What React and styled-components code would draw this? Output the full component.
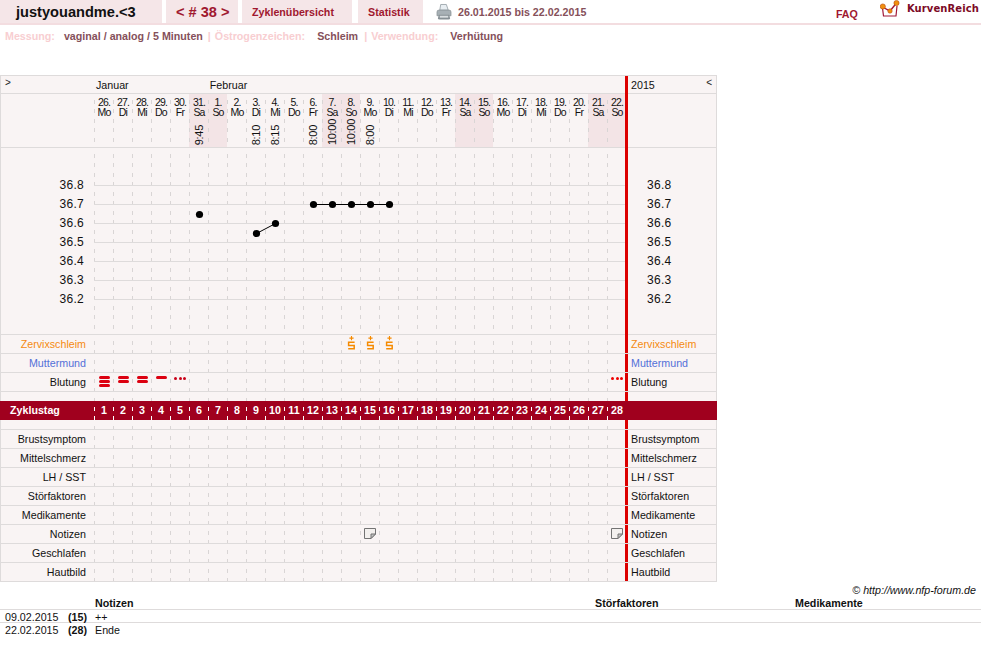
import React from "react"
import styled, { createGlobalStyle } from "styled-components"

const GlobalStyle = createGlobalStyle`
  html, body {
    margin: 0;
    padding: 0;
    background: #fff;
    font-family: "Liberation Sans", Arial, sans-serif;
    font-size: 10.7px;
    color: #111;
  }
`

const LINE = "#dedbdb"
const DASH = "#d9d5d5"
const PANEL = "#f9f4f4"
const COL = 19

const Page = styled.div`
  width: 981px;
  height: 661px;
  overflow: hidden;
`

const Header = styled.header`
  display: flex;
  height: 23px;
  border-bottom: 2px solid #f3dde0;
`
const Tab = styled.div`
  width: ${(p) => p.$w}px;
  margin-right: ${(p) => p.$gap || 0}px;
  padding-left: ${(p) => p.$pad || 0}px;
  box-sizing: border-box;
  background: #f5e6e8;
  color: ${(p) => p.$color || "#a0182f"};
  font-size: ${(p) => p.$size || 10.7}px;
  font-weight: bold;
  line-height: 24px;
  white-space: nowrap;
`
const PrintIcon = styled.svg`
  width: 16px;
  height: 18px;
  margin: 3px 6px 0 13px;
`
const DateRange = styled.div`
  color: #85505a;
  font-weight: bold;
  line-height: 24px;
`
const Faq = styled.div`
  margin-left: auto;
  margin-right: 22px;
  padding-top: 8px;
  color: #a0182f;
  font-weight: bold;
`
const LogoIcon = styled.svg`
  width: 20px;
  height: 18px;
  margin: 0 7px 0 0;
`
const LogoText = styled.div`
  margin-right: 2px;
  padding-top: 3px;
  color: #7c0a26;
  font-family: "DejaVu Sans", sans-serif;
  font-size: 10px;
  font-weight: bold;
  letter-spacing: 0.1px;
`

const Meta = styled.div`
  display: flex;
  height: 14px;
  margin: 4px 0 32px;
  padding-left: 5px;
  font-weight: bold;
  line-height: 14px;
`
const MetaKey = styled.span`
  color: #f8ced1;
  margin-left: ${(p) => p.$left || 0}px;
`
const MetaValue = styled.span`
  color: #85505a;
  margin-left: ${(p) => p.$left || 0}px;
`

const Table = styled.div`
  width: 717px;
  box-sizing: border-box;
  border: 1px solid ${LINE};
  border-width: 1px 1px 0;
  background: ${PANEL};
`
const Row = styled.div`
  display: grid;
  grid-template-columns: 93px 531px 1fr;
  height: ${(p) => p.$h}px;
  box-sizing: border-box;
  border-bottom: ${(p) => (p.$noLine ? "none" : `1px solid ${LINE}`)};
`
const Band = styled.div`
  display: grid;
  grid-template-columns: 94px 531px 1fr;
  height: 19px;
  margin: 0 -1px;
  background: #a0001e;
  color: #fff;
  font-weight: bold;
  line-height: 19px;
`
const BandLabel = styled.div`
  padding-left: 10px;
`
const RowLabel = styled.div`
  padding-right: 8px;
  text-align: right;
  line-height: 18px;
  color: ${(p) => p.$color || "#111"};
`
const SideCell = styled.div`
  position: relative;
  margin-bottom: ${(p) => (p.$joined ? "-1px" : "0")};
  padding-left: 3px;
  border-left: 3px solid #dc0000;
  line-height: 18px;
  color: ${(p) => p.$color || "#111"};
`
const SideHead = styled.div`
  display: flex;
  justify-content: space-between;
  padding-right: 4px;
`
const Toggle = styled.span`
  font-size: 10px;
  line-height: 13px;
  color: #222;
`
const CornerCell = styled.div`
  padding-left: 4px;
`
const Strip = styled.div`
  display: flex;
  overflow: hidden;
  position: relative;
`
const Month = styled.div`
  width: ${(p) => p.$cols * COL}px;
  padding-left: 2px;
  box-sizing: border-box;
  line-height: 18px;
`
const DayCell = styled.div`
  flex: 0 0 ${COL}px;
  box-sizing: border-box;
  padding-left: 1px;
  display: flex;
  flex-direction: column;
  align-items: center;
  background-color: ${(p) => (p.$weekend ? "#f3e4e6" : "transparent")};
  background-image: linear-gradient(
    to bottom,
    transparent 0 6px,
    ${(p) => p.$dash || DASH} 6px 10px,
    transparent 10px 15px,
    ${(p) => p.$dash || DASH} 15px 19px
  );
  background-size: 1px 19px;
  background-repeat: repeat-y;
`
const DayHead = styled.div`
  padding-top: 4px;
  text-align: center;
  font-size: 10.5px;
  line-height: 9.5px;
  letter-spacing: -0.8px;
  white-space: nowrap;
`
const TimeMark = styled.div`
  margin-top: auto;
  margin-bottom: 2px;
  writing-mode: vertical-rl;
  transform: rotate(180deg);
  font-size: 11px;
  line-height: 12px;
  letter-spacing: -0.3px;
`
const BandNum = styled.div`
  width: 100%;
  text-align: center;
`
const ScaleColumn = styled.div`
  padding-top: 28px;
  padding-right: ${(p) => p.$right || 0}px;
  padding-left: ${(p) => p.$left || 0}px;
  text-align: ${(p) => (p.$right ? "right" : "left")};
  font-size: 12px;
  line-height: 19px;
  letter-spacing: 0.3px;
`
const ChartSide = styled.div`
  margin-bottom: -1px;
  border-left: 3px solid #dc0000;
`
const ChartOverlay = styled.svg`
  position: absolute;
  inset: 0;
  width: 531px;
  height: 186px;
`
const BloodStack = styled.div`
  display: flex;
  flex-direction: column;
  gap: 1.4px;
  padding-top: 3px;
`
const Pill = styled.span`
  display: block;
  width: 11px;
  height: 2.8px;
  border-radius: 2px;
  background: #dc0010;
`
const Dots = styled.div`
  display: flex;
  gap: 1.2px;
  padding-top: 4px;
`
const Dot = styled.span`
  width: 3px;
  height: 3px;
  border-radius: 50%;
  background: ${(p) => (p.$bright ? "#ee0000" : "#c80018")};
`
const MarkSvg = styled.svg`
  display: block;
  margin-top: ${(p) => p.$top}px;
`

const Credit = styled.div`
  height: 15px;
  box-sizing: border-box;
  padding: 1px 5px 0 0;
  text-align: right;
  font-style: italic;
  line-height: 15px;
`
const NotesRow = styled.div`
  display: grid;
  grid-template-columns: 63px 27px 500px 200px 1fr;
  height: 13px;
  padding-left: 5px;
  padding-top: ${(p) => (p.$head ? 0 : 1)}px;
  box-sizing: border-box;
  border-bottom: ${(p) => (p.$noLine ? "none" : `1px solid ${LINE}`)};
  font-weight: ${(p) => (p.$head ? "bold" : "normal")};
  line-height: 12px;
`
const Strong = styled.span`
  font-weight: bold;
`

const weekdays = ["Mo", "Di", "Mi", "Do", "Fr", "Sa", "So"]
const dates = [26, 27, 28, 29, 30, 31, ...Array.from({ length: 22 }, (_, i) => i + 1)]
const times = { 5: "9:45", 8: "8:10", 9: "8:15", 11: "8:00", 12: "10:00", 13: "10:00", 14: "8:00" }
const scale = ["36.8", "36.7", "36.6", "36.5", "36.4", "36.3", "36.2"]
const cols = Array.from({ length: 28 }, (_, i) => i)

const isWeekend = (i) => i % 7 === 5 || i % 7 === 6
const cx = (i) => i * COL + 10.5

const points = [
  [5, 66.5],
  [8, 85.5],
  [9, 75.5],
  [11, 56.5],
  [12, 56.5],
  [13, 56.5],
  [14, 56.5],
  [15, 56.5],
]

const PrinterGlyph = () => (
  <PrintIcon viewBox="0 0 17 18">
    <path d="M5 1 L11 1 L13 7 L4 7 Z" fill="#e8eef2" stroke="#8b969c" strokeWidth="0.8" />
    <path d="M1 9 Q1 7 3 7 H14 Q16 7 16 9 V13 H1 Z" fill="#a7b0b5" stroke="#7c858a" strokeWidth="0.6" />
    <path d="M3 12 H14 L15 16 Q15 17 13 17 H4 Q2 17 2 16 Z" fill="#868f94" />
    <path d="M4 13 H13 V15 H4 Z" fill="#d9dee0" />
  </PrintIcon>
)

const LogoGlyph = () => (
  <LogoIcon viewBox="0 0 20 18">
    <path d="M2.5 8 L3.5 16 H16 L17 6" fill="none" stroke="#a01838" strokeWidth="1.2" />
    <path d="M2.5 7 L10 11 L16.5 3" fill="none" stroke="#a01838" strokeWidth="1.4" />
    <circle cx="2.8" cy="6.5" r="2.6" fill="#f09010" stroke="#b84810" strokeWidth="0.6" />
    <circle cx="10" cy="11" r="2.2" fill="#f09010" stroke="#b84810" strokeWidth="0.6" />
    <circle cx="16.5" cy="3" r="2.6" fill="#f09010" stroke="#b84810" strokeWidth="0.6" />
  </LogoIcon>
)

const SchleimMark = () => (
  <MarkSvg $top={1} width="9" height="14" viewBox="0 0 9 14" fill="none" stroke="#f58a00">
    <path d="M4.5 0 V4.2 M2.4 2.1 H6.6" strokeWidth="1.1" />
    <path d="M7.6 6.2 H1.6 V9.5 H7.2 V12.8 H1.2" strokeWidth="1.5" />
  </MarkSvg>
)

const NoteMark = () => (
  <MarkSvg $top={3} width="12" height="11" viewBox="0 0 12 11">
    <path d="M0.5 0.5 H11.5 V6 L7 10.5 H0.5 Z" fill="#f3f0ee" stroke="#737373" />
    <path d="M7 10.5 V6 H11.5 Z" fill="#c4c4c4" stroke="#737373" />
  </MarkSvg>
)

const BloodMark = ({ count }) => (
  <BloodStack>
    {Array.from({ length: count }, (_, i) => (
      <Pill key={i} />
    ))}
  </BloodStack>
)

const SpotMark = ({ bright }) => (
  <Dots>
    <Dot $bright={bright} />
    <Dot $bright={bright} />
    <Dot $bright={bright} />
  </Dots>
)

const DayStrip = ({ marks = {} }) => (
  <Strip>
    {cols.map((i) => (
      <DayCell key={i}>{marks[i]}</DayCell>
    ))}
  </Strip>
)

const DataRow = ({ label, color, marks }) => (
  <Row $h={19}>
    <RowLabel $color={color}>{label}</RowLabel>
    <DayStrip marks={marks} />
    <SideCell $color={color}>{label}</SideCell>
  </Row>
)

const TemperatureChart = () => (
  <Row $h={187}>
    <ScaleColumn $right={10}>
      {scale.map((t) => (
        <div key={t}>{t}</div>
      ))}
    </ScaleColumn>
    <Strip>
      {cols.map((i) => (
        <DayCell key={i} />
      ))}
      <ChartOverlay viewBox="0 0 531 186">
        {scale.map((t, i) => (
          <line key={t} x1="0" x2="531" y1={37.5 + i * 19} y2={37.5 + i * 19} stroke={LINE} />
        ))}
        <line x1={cx(8)} y1="85.5" x2={cx(9)} y2="75.5" stroke="#000" />
        <line x1={cx(11)} y1="56.5" x2={cx(15)} y2="56.5" stroke="#000" />
        {points.map(([col, y]) => (
          <circle key={col} cx={cx(col)} cy={y} r="3.6" fill="#000" />
        ))}
      </ChartOverlay>
    </Strip>
    <ChartSide>
      <ScaleColumn $left={19}>
        {scale.map((t) => (
          <div key={t}>{t}</div>
        ))}
      </ScaleColumn>
    </ChartSide>
  </Row>
)

export default function App() {
  return (
    <Page>
      <GlobalStyle />
      <Header>
        <Tab $w={162} $gap={4} $pad={16} $size={14.6} $color="#111">justyouandme.&lt;3</Tab>
        <Tab $w={72} $gap={4} $pad={10} $size={14.6}>&lt; # 38 &gt;</Tab>
        <Tab $w={110} $gap={6} $pad={10}>Zyklenübersicht</Tab>
        <Tab $w={65} $pad={10}>Statistik</Tab>
        <PrinterGlyph />
        <DateRange>26.01.2015 bis 22.02.2015</DateRange>
        <Faq>FAQ</Faq>
        <LogoGlyph />
        <LogoText>KurvenReich</LogoText>
      </Header>

      <Meta>
        <MetaKey>Messung:</MetaKey>
        <MetaValue $left={9}>vaginal / analog / 5 Minuten</MetaValue>
        <MetaKey $left={5}>|</MetaKey>
        <MetaKey $left={4}>Östrogenzeichen:</MetaKey>
        <MetaValue $left={12}>Schleim</MetaValue>
        <MetaKey $left={6}>|</MetaKey>
        <MetaKey $left={4}>Verwendung:</MetaKey>
        <MetaValue $left={12}>Verhütung</MetaValue>
      </Meta>

      <Table>
        <Row $h={18}>
          <CornerCell>
            <Toggle>&gt;</Toggle>
          </CornerCell>
          <Strip>
            <Month $cols={6}>Januar</Month>
            <Month $cols={22}>Februar</Month>
          </Strip>
          <SideCell $joined>
            <SideHead>
              <span>2015</span>
              <Toggle>&lt;</Toggle>
            </SideHead>
          </SideCell>
        </Row>

        <Row $h={54}>
          <div />
          <Strip>
            {cols.map((i) => (
              <DayCell key={i} $weekend={isWeekend(i)}>
                <DayHead>
                  {dates[i]}.
                  <br />
                  {weekdays[i % 7]}
                </DayHead>
                {times[i] && <TimeMark>{times[i]}</TimeMark>}
              </DayCell>
            ))}
          </Strip>
          <SideCell $joined />
        </Row>

        <TemperatureChart />

        <DataRow
          label="Zervixschleim"
          color="#f58a10"
          marks={{ 13: <SchleimMark />, 14: <SchleimMark />, 15: <SchleimMark /> }}
        />
        <DataRow label="Muttermund" color="#5470d8" />
        <DataRow
          label="Blutung"
          marks={{
            0: <BloodMark count={3} />,
            1: <BloodMark count={2} />,
            2: <BloodMark count={2} />,
            3: <BloodMark count={1} />,
            4: <SpotMark />,
            27: <SpotMark bright />,
          }}
        />

        <Row $h={9} $noLine>
          <div />
          <DayStrip />
          <SideCell />
        </Row>

        <Band>
          <BandLabel>Zyklustag</BandLabel>
          <Strip>
            {cols.map((i) => (
              <DayCell key={i} $dash="#ffffff">
                <BandNum>{i + 1}</BandNum>
              </DayCell>
            ))}
          </Strip>
          <div />
        </Band>

        <Row $h={10}>
          <div />
          <DayStrip />
          <SideCell />
        </Row>

        <DataRow label="Brustsymptom" />
        <DataRow label="Mittelschmerz" />
        <DataRow label="LH / SST" />
        <DataRow label="Störfaktoren" />
        <DataRow label="Medikamente" />
        <DataRow label="Notizen" marks={{ 14: <NoteMark />, 27: <NoteMark /> }} />
        <DataRow label="Geschlafen" />
        <DataRow label="Hautbild" />
      </Table>

      <Credit>© http://www.nfp-forum.de</Credit>

      <NotesRow $head>
        <span />
        <span />
        <span>Notizen</span>
        <span>Störfaktoren</span>
        <span>Medikamente</span>
      </NotesRow>
      <NotesRow>
        <span>09.02.2015</span>
        <Strong>(15)</Strong>
        <span>++</span>
      </NotesRow>
      <NotesRow $noLine>
        <span>22.02.2015</span>
        <Strong>(28)</Strong>
        <span>Ende</span>
      </NotesRow>
    </Page>
  )
}
